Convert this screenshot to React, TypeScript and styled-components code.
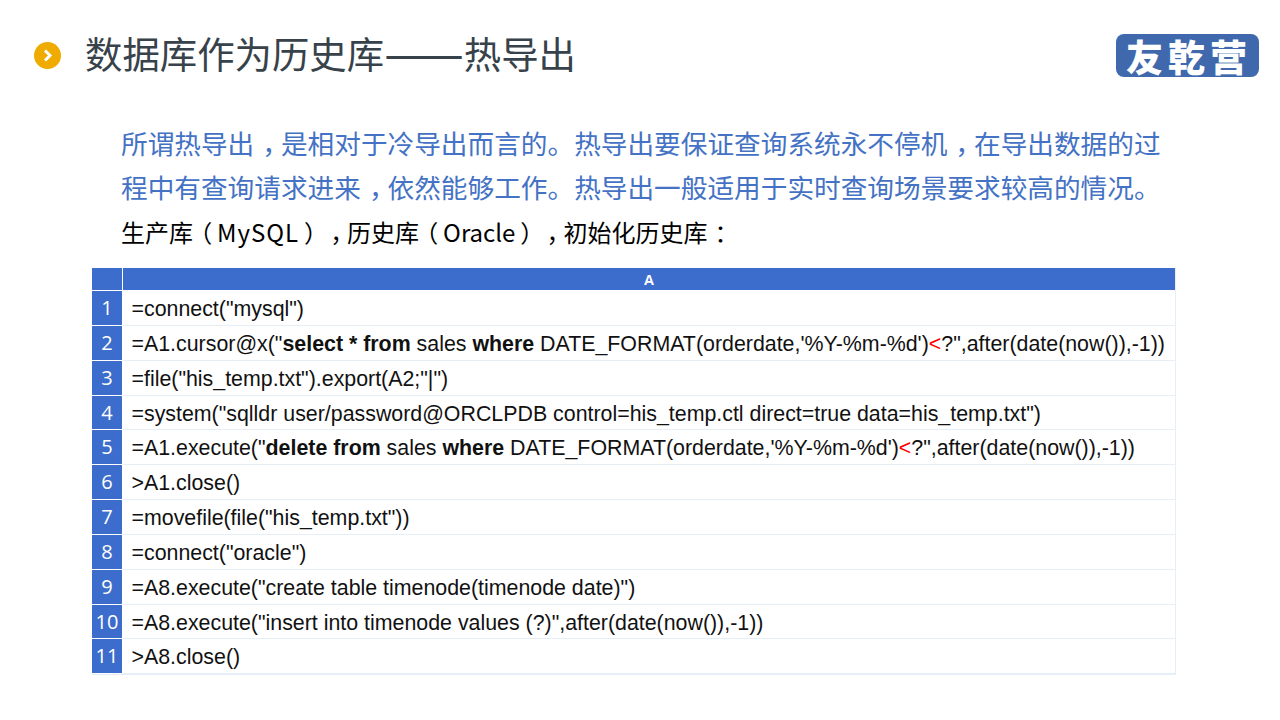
import React from 'react';
import styled, { createGlobalStyle } from 'styled-components';

const cjk = `'Noto Sans CJK SC', 'Noto Sans', sans-serif`;
const latin = `'Liberation Sans', Arial, 'Noto Sans CJK SC', sans-serif`;

const GlobalStyle = createGlobalStyle`
  html, body {
    margin: 0;
    padding: 0;
    background: #ffffff;
  }
`;

const Slide = styled.div`
  width: 1280px;
  height: 720px;
  overflow: hidden;
  display: flex;
  flex-direction: column;
  font-family: ${cjk};
  text-spacing-trim: space-all;
`;

const Header = styled.header`
  height: 111px;
  padding: 0 21px 0 34px;
  display: flex;
  align-items: center;
  justify-content: space-between;
`;

const TitleGroup = styled.div`
  display: flex;
  align-items: center;
  gap: 24px;
`;

const Bullet = styled.span`
  width: 27px;
  height: 27px;
  border-radius: 50%;
  background: #f0ab00;
  display: flex;
  align-items: center;
  justify-content: center;
`;

const Title = styled.h1`
  margin: -5px 0 0;
  font-size: 37.4px;
  font-weight: 400;
  line-height: 50px;
  color: #37424a;
  white-space: nowrap;
`;

const Dash = styled.span`
  font-size: 47.5px;
  line-height: 0;
  vertical-align: -2px;
`;

const Logo = styled.div`
  width: 143px;
  height: 43px;
  border-radius: 8px;
  background: #3f69ac;
  color: #ffffff;
  font-size: 37px;
  font-weight: 900;
  line-height: 44px;
  text-align: center;
  letter-spacing: 5px;
  padding-left: 3px;
  box-sizing: border-box;
  white-space: nowrap;
`;

const Intro = styled.section`
  padding: 10px 0 0 121px;
`;

const Lead = styled.p`
  margin: 0;
  width: 1060px;
  font-size: 26.67px;
  line-height: 44px;
  color: #4472c4;
`;

const Note = styled.p`
  margin: 1px 0 0;
  font-size: 24px;
  line-height: 44px;
  color: #000000;
  white-space: nowrap;
`;

const Wide = styled.span`
  letter-spacing: 1px;
`;

// punctuation in the source deck sits in the middle of its cell: half width glyph plus padding
const Punct = styled.span<{ $before: number; $after: number }>`
  display: inline-block;
  font-feature-settings: 'halt';
  padding: 0 ${(p) => p.$after}em 0 ${(p) => p.$before}em;
`;

const Comma = () => <Punct $before={0.3} $after={0.2}>，</Punct>;
const Open = () => <Punct $before={0.3} $after={0.2}>（</Punct>;
const Close = () => <Punct $before={0.2} $after={0.3}>）</Punct>;

const Sheet = styled.div`
  margin: 14px 0 0 92px;
  width: 1084px;
  display: grid;
  grid-template-columns: 30px 1fr;
  column-gap: 1px;
  border-right: 1px solid #e6eef8;
  border-bottom: 1px solid #e6eef8;
  box-sizing: border-box;
`;

const HeadCell = styled.div`
  height: 22px;
  background: #3c6dcc;
  color: #ffffff;
  font-family: ${latin};
  font-size: 14.5px;
  font-weight: 700;
  line-height: 25px;
  text-align: center;
  margin-bottom: 1px;
`;

const RowNo = styled.div`
  height: 33.85px;
  margin-bottom: 1px;
  background: #3c6dcc;
  color: #ffffff;
  font-family: 'Open Sans', 'Noto Sans', sans-serif;
  font-size: 20px;
  line-height: 34px;
  text-align: center;
`;

const Code = styled.div`
  height: 33.85px;
  margin-bottom: 1px;
  padding-left: 8.5px;
  box-shadow: 0 1px 0 #e6eef8;
  font-family: ${latin};
  font-size: 21.36px;
  line-height: 37px;
  color: #111111;
  white-space: nowrap;
`;

const Kw = styled.b`
  font-weight: 700;
`;

const Lt = styled.span`
  color: #ff0000;
`;

const rows: React.ReactNode[] = [
  '=connect("mysql")',
  <>=A1.cursor@x("<Kw>select * from</Kw> sales <Kw>where</Kw> DATE_FORMAT(orderdate,'%Y-%m-%d')<Lt>&lt;</Lt>?",after(date(now()),-1))</>,
  '=file("his_temp.txt").export(A2;"|")',
  '=system("sqlldr user/password@ORCLPDB control=his_temp.ctl direct=true data=his_temp.txt")',
  <>=A1.execute("<Kw>delete from</Kw> sales <Kw>where</Kw> DATE_FORMAT(orderdate,'%Y-%m-%d')<Lt>&lt;</Lt>?",after(date(now()),-1))</>,
  '>A1.close()',
  '=movefile(file("his_temp.txt"))',
  '=connect("oracle")',
  '=A8.execute("create table timenode(timenode date)")',
  '=A8.execute("insert into timenode values (?)",after(date(now()),-1))',
  '>A8.close()',
];

export default function App() {
  return (
    <Slide>
      <GlobalStyle />
      <Header>
        <TitleGroup>
          <Bullet>
            <svg width="13" height="15" viewBox="0 0 13 15">
              <path d="M4 2.5 L9 7.5 L4 12.5" fill="none" stroke="#ffffff" strokeWidth="3" />
            </svg>
          </Bullet>
          <Title>数据库作为历史库<Dash>——</Dash>热导出</Title>
        </TitleGroup>
        <Logo>友乾营</Logo>
      </Header>
      <Intro>
        <Lead>
          所谓热导出<Comma />是相对于冷导出而言的。热导出要保证查询系统永不停机<Comma />在导出数据的过程中有查询请求进来<Comma />依然能够工作。热导出一般适用于实时查询场景要求较高的情况。
        </Lead>
        <Note>
          生产库<Open /><Wide>MySQL</Wide><Close /><Comma />历史库<Open />Oracle<Close /><Comma />初始化历史库<Punct $before={0.3} $after={0.2}>：</Punct>
        </Note>
      </Intro>
      <Sheet>
        <HeadCell />
        <HeadCell>A</HeadCell>
        {rows.map((row, i) => (
          <React.Fragment key={i}>
            <RowNo>{i + 1}</RowNo>
            <Code>{row}</Code>
          </React.Fragment>
        ))}
      </Sheet>
    </Slide>
  );
}
